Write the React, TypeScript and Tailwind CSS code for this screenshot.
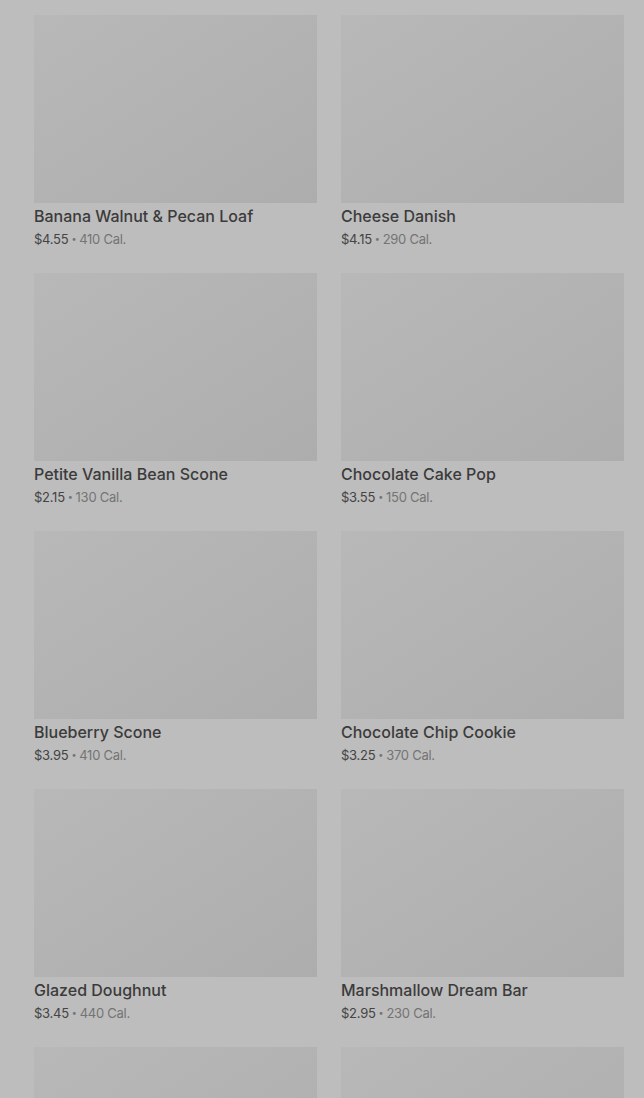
const items = [
  { name: "Banana Walnut & Pecan Loaf", price: "$4.55", cal: "410 Cal." },
  { name: "Cheese Danish", price: "$4.15", cal: "290 Cal." },
  { name: "Petite Vanilla Bean Scone", price: "$2.15", cal: "130 Cal." },
  { name: "Chocolate Cake Pop", price: "$3.55", cal: "150 Cal." },
  { name: "Blueberry Scone", price: "$3.95", cal: "410 Cal." },
  { name: "Chocolate Chip Cookie", price: "$3.25", cal: "370 Cal." },
  { name: "Glazed Doughnut", price: "$3.45", cal: "440 Cal." },
  { name: "Marshmallow Dream Bar", price: "$2.95", cal: "230 Cal." },
  { name: "Butter Croissant", price: "$3.25", cal: "260 Cal." },
  { name: "Chocolate Croissant", price: "$3.75", cal: "300 Cal." },
];

export default function App() {
  return (
    <div
      className="min-h-screen bg-[#bdbdbd] pl-[34px] pr-[20px] pt-[15px] pb-6"
      style={{ fontFamily: "Inter, 'Liberation Sans', sans-serif" }}
    >
      <div className="grid grid-cols-2 gap-x-6 gap-y-[24px]">
        {items.map((item) => (
          <div key={item.name} className="flex flex-col">
            {/* image placeholder */}
            <div className="h-[188px] w-full bg-gradient-to-br from-[#b8b8b8] to-[#adadad]" />
            <div className="mt-[1px] h-6 text-[16px] leading-6 font-medium text-[#3b3b3b] truncate">
              {item.name}
            </div>
            <div className="mt-[1px] h-5 flex items-center gap-[3px] text-[13px] leading-5 text-[#747474] tracking-[-0.02em]">
              <span className="text-[#444]">{item.price}</span>
              <span className="text-[9px]">•</span>
              <span>{item.cal}</span>
            </div>
          </div>
        ))}
      </div>
    </div>
  );
}
